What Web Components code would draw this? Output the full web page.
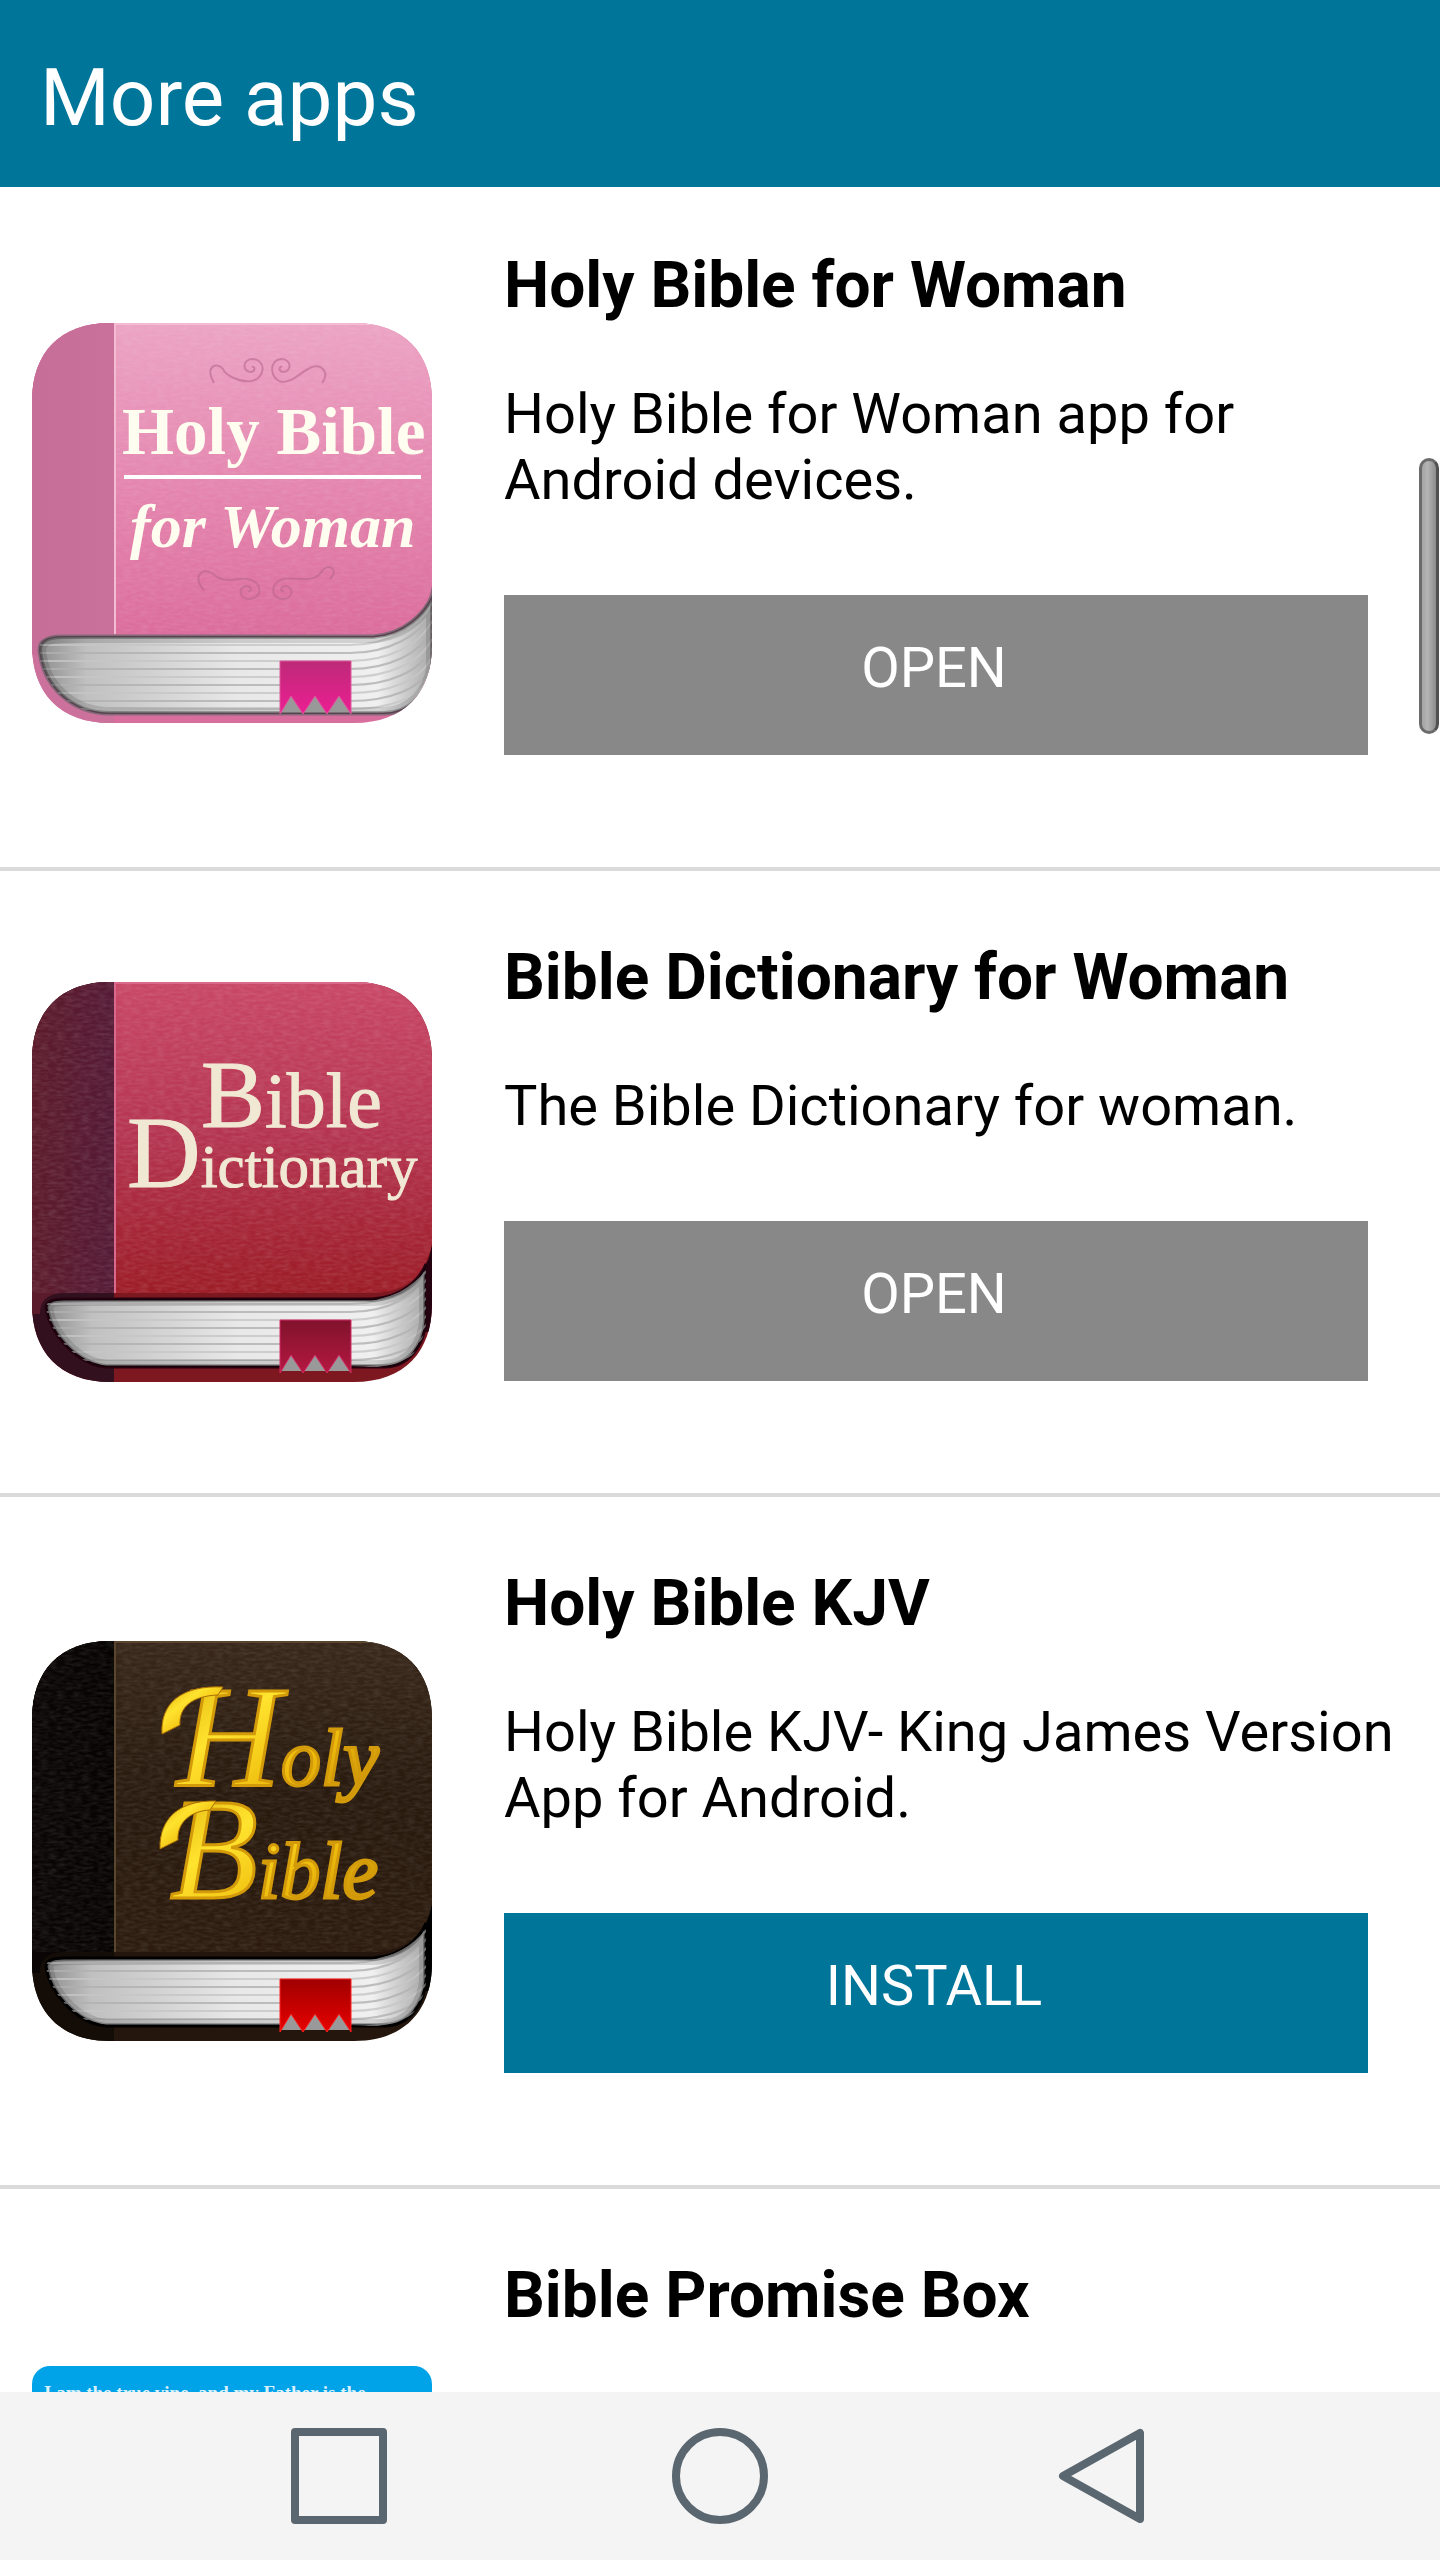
<!DOCTYPE html>
<html lang="en">
<head>
<meta charset="utf-8">
<meta name="viewport" content="width=device-width, initial-scale=1">
<title>More apps</title>
<style>
  html, body {
    height: 100%;
  }

  body {
    margin: 0;
    background: #fff;
    color: #000;
    font-family: Roboto, "Liberation Sans", sans-serif;
  }
</style>
</head>
<body>
<more-apps>
  <app-header slot="header">More apps</app-header>

  <app-card action="Open">
    <book-icon slot="icon" theme="pink"></book-icon>
    <span slot="name">Holy Bible for Woman</span>
    <span slot="description">Holy Bible for Woman app for Android devices.</span>
  </app-card>

  <app-card action="Open">
    <book-icon slot="icon" theme="red"></book-icon>
    <span slot="name">Bible Dictionary for Woman</span>
    <span slot="description">The Bible Dictionary for woman.</span>
  </app-card>

  <app-card action="Install">
    <book-icon slot="icon" theme="brown"></book-icon>
    <span slot="name">Holy Bible KJV</span>
    <span slot="description">Holy Bible KJV- King James Version App for Android.</span>
  </app-card>

  <app-card class="tall">
    <promise-icon slot="icon"></promise-icon>
    <span slot="name">Bible Promise Box</span>
  </app-card>

  <system-nav slot="footer"></system-nav>
</more-apps>

<script>
class MoreApps extends HTMLElement {
  constructor() {
    super();
    this.attachShadow({ mode: "open" });
  }

  connectedCallback() {
    this.shadowRoot.innerHTML = `
      <style>
        :host {
          display: flex;
          flex-direction: column;
          height: 100vh;
          overflow: hidden;
          position: relative;
        }

        main {
          flex: 1;
          min-height: 0;
          overflow: hidden;
        }

        /* the list rests slightly scrolled under the header */
        .list {
          margin-top: -8px;
        }

        ::slotted(app-card.tall) {
          min-height: 758px;
        }

        .thumb {
          position: absolute;
          top: 458px;
          right: 1px;
          width: 20px;
          height: 276px;
          box-sizing: border-box;
          border: 3px solid #6b6b6b;
          border-right-color: #505050;
          border-radius: 10px;
          background: linear-gradient(90deg, #a4a4a4, #b4b4b4 40%, #8c8c8c);
        }
      </style>
      <slot name="header"></slot>
      <main><div class="list"><slot></slot></div></main>
      <slot name="footer"></slot>
      <div class="thumb"></div>
    `;
  }
}

class AppHeader extends HTMLElement {
  constructor() {
    super();
    this.attachShadow({ mode: "open" });
  }

  connectedCallback() {
    this.shadowRoot.innerHTML = `
      <style>
        :host {
          display: block;
          flex: none;
          position: relative;
          z-index: 1;
          padding: 51px 40px 42px;
          background: #00759a;
          color: #fff;
        }

        h1 {
          margin: 0;
          font-size: 80px;
          line-height: 94px;
          font-weight: 400;
        }
      </style>
      <h1><slot></slot></h1>
    `;
  }
}

class AppCard extends HTMLElement {
  constructor() {
    super();
    this.attachShadow({ mode: "open" });
  }

  connectedCallback() {
    const action = this.getAttribute("action");

    this.shadowRoot.innerHTML = `
      <style>
        :host {
          display: flex;
          align-items: center;
          gap: 72px;
          box-sizing: border-box;
          padding: 0 32px;
          border-bottom: 4px solid #dadada;
        }

        .icon {
          flex: none;
          width: 400px;
          height: 400px;
        }

        .info {
          flex: 1;
          align-self: stretch;
          padding: 69px 0 112px;
        }

        h2 {
          margin: 0 0 58px;
          font-size: 64px;
          line-height: 75px;
          font-weight: 700;
        }

        p {
          margin: 0 0 82px;
          font-size: 56px;
          line-height: 66px;
        }

        button {
          display: block;
          width: calc(100% - 40px);
          height: 160px;
          margin: 0;
          padding: 0 4px 14px 0;
          border: 0;
          background: #888;
          color: #fff;
          font: inherit;
          font-size: 56px;
          text-transform: uppercase;
          cursor: pointer;
        }

        button.install {
          background: #00759a;
        }
      </style>
      <div class="icon"><slot name="icon"></slot></div>
      <div class="info">
        <h2><slot name="name"></slot></h2>
        ${action ? `
          <p><slot name="description"></slot></p>
          <button type="button" class="${action.toLowerCase()}">${action}</button>
        ` : ""}
      </div>
    `;
  }
}

const PAGES = {
  wide: "M30 313 H341 C372 311 393 290 401 270 V345 C398 370 378 391 352 391 H78 C38 391 10 362 7 327 C7 318 14 313 30 313 Z",
  narrow: "M32 317 H341 C370 315 388 298 394 282 V340 C392 362 378 385 352 385 H74 C44 382 18 352 14 326 C14 320 20 317 32 317 Z"
};

const THEMES = {
  pink: {
    cover: ["#eca4c4", "#e587b0", "#db6c9b"],
    spine: ["#c66e98", "#ca719b"],
    line: "#f3bcd3",
    rim: "#d86e9e",
    rimLeft: "#cc719c",
    edge: "#85697a",
    ribbon: ["#bd2a78", "#ec1e93"],
    ribbonEdge: "#e0569c",
    pages: PAGES.wide,
    grain: 0.1,
    grainFrom: 84,
    title: `
      <g fill="none" stroke="#b9668e" stroke-width="2" opacity=".6">
        <path d="M182 60 C172 42 186 39 191 46 C193 52 208 60 220 58 C234 54 234 37 221 36 C210 36 210 49 219 49 C224 48 223 43 220 44"/>
        <path d="M290 60 C298 50 290 41 280 44 C268 49 262 59 250 59 C238 57 236 37 249 36 C260 36 260 49 251 49 C246 48 247 43 250 44"/>
        <path d="M172 267 C160 254 170 244 180 250 C192 262 205 254 216 256 C232 260 230 275 218 276 C206 276 206 263 215 263 C221 264 219 270 216 268"/>
        <path d="M298 256 C308 247 296 239 290 248 C282 262 262 253 251 256 C238 260 238 275 250 276 C262 276 262 263 253 263 C247 264 249 270 252 268"/>
      </g>
      <g fill="#fffdf0" font-family="'Liberation Serif', serif" font-weight="700">
        <text x="90" y="131" font-size="67">Holy Bible</text>
        <text x="98" y="224" font-size="62" font-style="italic">for Woman</text>
      </g>
      <path d="M92 154 H389" stroke="#fff" stroke-width="4"/>`
  },
  red: {
    cover: ["#c94767", "#b43450", "#9c1c26"],
    spine: ["#5c1b2a", "#551a36"],
    line: "#d9688b",
    rim: "#7d1821",
    rimLeft: "#32101d",
    edge: "#25020f",
    ribbon: ["#80122c", "#b51840"],
    ribbonEdge: "#d42a66",
    pages: PAGES.narrow,
    grain: 0.12,
    grainFrom: 0,
    title: `
      <g fill="#f1e8d4" stroke="#f1e8d4" stroke-width="1" font-family="'Liberation Serif', serif">
        <text x="169" y="145" font-size="78"><tspan font-size="96">B</tspan>ible</text>
        <text x="95" y="205" font-size="61"><tspan font-size="102">D</tspan>ictionary</text>
      </g>`
  },
  brown: {
    cover: ["#38271a", "#291a0e", "#2c1b0e"],
    spine: ["#0b0605", "#050302"],
    line: "#5a452d",
    rim: "#24160c",
    rimLeft: "#140c07",
    edge: "#000",
    ribbon: ["#a00000", "#e80000"],
    ribbonEdge: "#ff2020",
    pages: PAGES.narrow,
    grain: 0.1,
    grainFrom: 0,
    title: `
      <g fill="url(#gold)" stroke="#d39a0a" stroke-width="3" font-family="'Liberation Serif', serif" font-style="italic">
        <text x="145" y="144" font-size="80"><tspan font-size="144">H</tspan>oly</text>
        <text x="138" y="257" font-size="80"><tspan font-size="144">B</tspan>ible</text>
      </g>
      <g fill="url(#gold)" stroke="#a86c05" stroke-width="1">
        <path d="M130 93 C128 62 150 44 191 46 L186 54 C160 55 147 66 148 84 Z"/>
        <path d="M128 208 C127 178 147 159 184 160 L178 169 C158 170 145 182 146 199 Z"/>
      </g>`
  }
};

class BookIcon extends HTMLElement {
  constructor() {
    super();
    this.attachShadow({ mode: "open" });
  }

  connectedCallback() {
    const t = THEMES[this.getAttribute("theme")];

    this.shadowRoot.innerHTML = `
      <style>
        :host {
          display: block;
        }

        svg {
          display: block;
          width: 100%;
          height: auto;
        }
      </style>
      <svg viewBox="0 0 400 400" aria-hidden="true">
        <defs>
          <clipPath id="shape">
            <path d="M78 0 H322 C372 0 400 30 400 78 V322 C400 370 372 400 322 400 H78 C28 400 0 370 0 322 V78 C0 30 28 0 78 0 Z"/>
          </clipPath>
          <clipPath id="pages"><path d="${t.pages}"/></clipPath>
          <clipPath id="leather">
            <path d="M${t.grainFrom} 0 H400 V262 C394 292 374 311 341 311 H${t.grainFrom} Z"/>
          </clipPath>
          <linearGradient id="cover" x1="0" y1="0" x2="0" y2="1">
            <stop offset="0" stop-color="${t.cover[0]}"/>
            <stop offset=".5" stop-color="${t.cover[1]}"/>
            <stop offset="1" stop-color="${t.cover[2]}"/>
          </linearGradient>
          <linearGradient id="spine" x1="0" y1="0" x2="1" y2="0">
            <stop offset="0" stop-color="${t.spine[0]}"/>
            <stop offset="1" stop-color="${t.spine[1]}"/>
          </linearGradient>
          <linearGradient id="paper" x1="0" y1="0" x2="1" y2="0">
            <stop offset="0" stop-color="#8e8e8e"/>
            <stop offset=".12" stop-color="#c0c0c0"/>
            <stop offset=".5" stop-color="#e8e8e8"/>
            <stop offset=".86" stop-color="#f0f0f0"/>
            <stop offset="1" stop-color="#a8a8a8"/>
          </linearGradient>
          <linearGradient id="ribbon" x1="0" y1="0" x2="0" y2="1">
            <stop offset="0" stop-color="${t.ribbon[0]}"/>
            <stop offset="1" stop-color="${t.ribbon[1]}"/>
          </linearGradient>
          <linearGradient id="gold" x1="0" y1="0" x2="1" y2="1">
            <stop offset="0" stop-color="#d9a908"/>
            <stop offset=".35" stop-color="#ffe32e"/>
            <stop offset=".65" stop-color="#eebb0c"/>
            <stop offset="1" stop-color="#b97a08"/>
          </linearGradient>
          <filter id="grain" x="0" y="0" width="100%" height="100%">
            <feTurbulence type="fractalNoise" baseFrequency=".12 .35" numOctaves="2" seed="4"/>
            <feColorMatrix values="0 0 0 0 1  0 0 0 0 1  0 0 0 0 1  1.6 0 0 0 -.5"/>
          </filter>
        </defs>
        <g clip-path="url(#shape)">
          <rect width="400" height="400" fill="${t.rim}"/>
          <rect width="82" height="400" fill="${t.rimLeft}"/>
          <path d="M0 0 H82 V311 H34 C16 311 8 318 8 332 L0 332 Z" fill="url(#spine)"/>
          <path d="M341 318 C378 314 396 290 400 262 V350 H341 Z" fill="${t.edge}"/>
          <path d="M82 0 H400 V262 C394 292 374 311 341 311 H82 Z" fill="url(#cover)"/>
          <g clip-path="url(#leather)">
            <rect width="400" height="312" filter="url(#grain)" opacity="${t.grain}"/>
          </g>
          <path d="M83 0 V311 M82 1 H400" fill="none" stroke="${t.line}" stroke-width="2"/>
          <path d="${t.pages}" fill="url(#paper)" stroke="${t.edge}" stroke-width="3"/>
          <g clip-path="url(#pages)" fill="none">
            ${this.pageLines()}
            <path d="${t.pages}" stroke="#000" stroke-width="6" opacity=".25"/>
            <path d="${t.pages}" stroke="#000" stroke-width="14" opacity=".12"/>
          </g>
          <path d="M248 389 L259 371 L271 389 L283 371 L295 389 L307 371 L319 389 Z" fill="#999"/>
          <path d="M248 338 H319 V391 L307 373 L295 391 L283 373 L271 391 L259 373 L248 391 Z" fill="url(#ribbon)" stroke="${t.ribbonEdge}" stroke-width="1"/>
          ${t.title}
        </g>
      </svg>
    `;
  }

  // Sheets run flat along the bottom and fan upwards at the right corner.
  pageLines() {
    let lines = "";
    for (let i = 0; i < 9; i++) {
      const y = 322 + i * 8;
      const end = 280 + i * 9;
      const shade = i % 2 ? "#b0b0b0" : "#c6c6c6";
      lines += `<path d="M8 ${y} H318 C356 ${y} 388 ${end + 24} 400 ${end}" stroke="${shade}" stroke-width="2" opacity=".8"/>`;
    }
    return lines;
  }
}

class PromiseIcon extends HTMLElement {
  constructor() {
    super();
    this.attachShadow({ mode: "open" });
  }

  connectedCallback() {
    this.shadowRoot.innerHTML = `
      <style>
        :host {
          display: block;
          height: 400px;
          box-sizing: border-box;
          padding: 16px 12px;
          border-radius: 18px;
          background: #00a2e8;
          color: #d9f1fc;
          font: 700 19px/22px "Liberation Serif", serif;
        }
      </style>
      I am the true vine, and my Father is the
    `;
  }
}

class SystemNav extends HTMLElement {
  constructor() {
    super();
    this.attachShadow({ mode: "open" });
  }

  connectedCallback() {
    this.shadowRoot.innerHTML = `
      <style>
        :host {
          display: block;
          flex: none;
          position: relative;
          z-index: 1;
          background: #f4f4f4;
        }

        nav {
          display: grid;
          grid-template-columns: repeat(3, 1fr);
          justify-items: center;
          padding: 36px 148px;
        }

        button {
          width: 96px;
          height: 96px;
          padding: 0;
          border: 0;
          background: none;
          cursor: pointer;
        }

        svg {
          display: block;
          fill: none;
          stroke: #5b6770;
          stroke-width: 8;
          stroke-linejoin: round;
        }
      </style>
      <nav>
        <button type="button" aria-label="Recent apps">
          <svg width="96" height="96" viewBox="0 0 96 96"><rect x="4" y="4" width="88" height="88"/></svg>
        </button>
        <button type="button" aria-label="Home">
          <svg width="96" height="96" viewBox="0 0 96 96"><circle cx="48" cy="48" r="44"/></svg>
        </button>
        <button type="button" aria-label="Back">
          <svg width="96" height="96" viewBox="0 0 96 96"><path d="M87 5 V91 L10 48 Z"/></svg>
        </button>
      </nav>
    `;
  }
}

customElements.define("more-apps", MoreApps);
customElements.define("app-header", AppHeader);
customElements.define("app-card", AppCard);
customElements.define("book-icon", BookIcon);
customElements.define("promise-icon", PromiseIcon);
customElements.define("system-nav", SystemNav);
</script>
</body>
</html>
